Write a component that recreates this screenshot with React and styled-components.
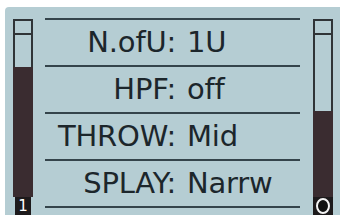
import React from "react"
import styled, { createGlobalStyle } from "styled-components"

const GlobalStyle = createGlobalStyle`
  html, body {
    margin: 0;
    padding: 0;
    background: #ffffff;
  }
  body {
    font-family: "DejaVu Sans", Verdana, sans-serif;
  }
`

const rows = [
  { label: "N.ofU:", value: "1U" },
  { label: "HPF:", value: "off" },
  { label: "THROW:", value: "Mid" },
  { label: "SPLAY:", value: "Narrw" },
]

const App = () => {
  return (
    <>
      <GlobalStyle />
      <Screen>
        <Meter level={80}>
          <TagText>1</TagText>
        </Meter>
        <List>
          {rows.map((row) => (
            <Row key={row.label}>
              <Label>{row.label}</Label>
              <Value>{row.value}</Value>
            </Row>
          ))}
        </List>
        <Meter level={53} wide>
          <Ring title="O" />
        </Meter>
      </Screen>
    </>
  )
}

const Meter = ({ level, wide, children }) => (
  <MeterWrap>
    <MeterBox>
      <MeterCap />
      <MeterTrack>
        <MeterFill style={{ height: `${level}%` }} />
      </MeterTrack>
    </MeterBox>
    <MeterTag wide={wide ? 1 : 0}>{children}</MeterTag>
  </MeterWrap>
)

export default App

const Screen = styled.div`
  margin: 7px 0 0 5px;
  width: 335px;
  height: 208px;
  box-sizing: border-box;
  padding: 11px 7px 0 8px;
  background: #b5cdd3;
  border-top-left-radius: 4px;
  display: flex;
  align-items: stretch;
  overflow: hidden;
`

const MeterWrap = styled.div`
  width: 20px;
  margin-top: 1px;
  display: flex;
  flex-direction: column;
`

const MeterBox = styled.div`
  flex: 1;
  display: flex;
  flex-direction: column;
  border: 2px solid #2f3437;
  border-bottom: none;
`

const MeterCap = styled.div`
  height: 12px;
  border-bottom: 2px solid #2f3437;
`

const MeterTrack = styled.div`
  flex: 1;
  display: flex;
  flex-direction: column;
  justify-content: flex-end;
  margin: 0 -2px;
`

const MeterFill = styled.div`
  background: #3a2c30;
`

const MeterTag = styled.div`
  height: 18px;
  margin: 0 ${(p) => (p.wide ? 0 : 2)}px;
  background: #1d1a1c;
  display: flex;
  align-items: center;
  justify-content: center;
`

const TagText = styled.span`
  color: #ffffff;
  font-family: "DejaVu Sans", sans-serif;
  font-size: 15px;
  line-height: 18px;
`

const Ring = styled.span`
  width: 10px;
  height: 12px;
  border: 2px solid #f4f4f4;
  border-radius: 50%;
  background: #111;
`

const List = styled.div`
  width: 255px;
  margin: 0 13px 0 12px;
  border-top: 2px solid #34444b;
  align-self: flex-start;
`

const Row = styled.div`
  height: 45px;
  border-bottom: 2px solid #34444b;
  display: flex;
  align-items: center;
  color: #1c262b;
  font-size: 29px;
  line-height: 45px;
  letter-spacing: -0.2px;
`

const Label = styled.span`
  width: 131px;
  text-align: right;
`

const Value = styled.span`
  margin-left: 11px;
`
